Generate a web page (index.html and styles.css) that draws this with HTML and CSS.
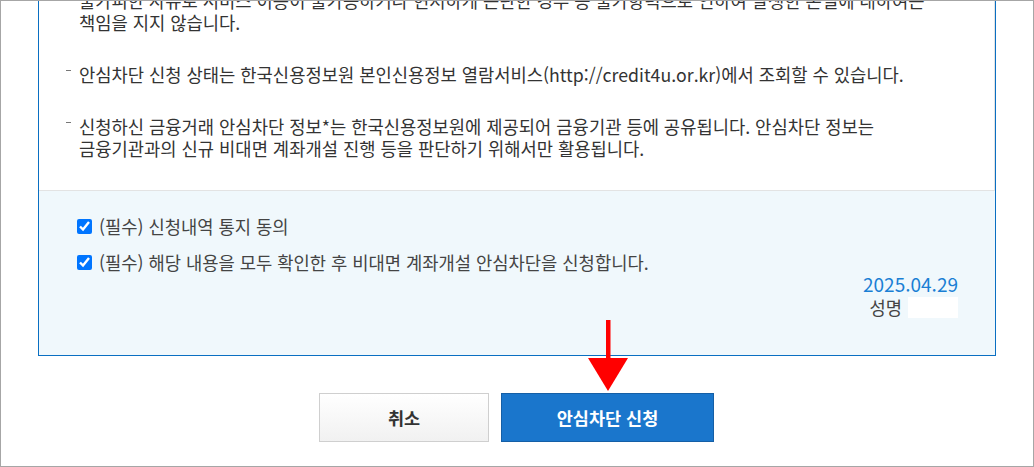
FILE: index.html
```html
<!DOCTYPE html>
<html lang="ko">
<head>
<meta charset="utf-8">
<title>안심차단 신청</title>
<link rel="stylesheet" href="styles.css">
</head>
<body>
<div class="frame">
  <div class="box">
    <ul class="notice">
      <li><span class="txt">불가피한 사유로 서비스 이용이 불가능하거나 현저하게 곤란한 경우 등 불가항력으로 인하여 발생한 손실에 대하여는<br>책임을 지지 않습니다.</span></li>
      <li><span class="txt">안심차단 신청 상태는 한국신용정보원 본인신용정보 열람서비스(http://credit4u.or.kr)에서 조회할 수 있습니다.</span></li>
      <li><span class="txt">신청하신 금융거래 안심차단 정보*는 한국신용정보원에 제공되어 금융기관 등에 공유됩니다. 안심차단 정보는<br>금융기관과의 신규 비대면 계좌개설 진행 등을 판단하기 위해서만 활용됩니다.</span></li>
    </ul>
    <div class="agree">
      <label class="check"><input type="checkbox" checked><span>(필수) 신청내역 통지 동의</span></label>
      <label class="check"><input type="checkbox" checked><span>(필수) 해당 내용을 모두 확인한 후 비대면 계좌개설 안심차단을 신청합니다.</span></label>
      <div class="sign">
        <div class="date">2025.04.29</div>
        <div class="name"><span>성명</span><span class="name-box"></span></div>
      </div>
    </div>
  </div>
  <div class="buttons">
    <button class="btn btn-cancel" type="button">취소</button>
    <button class="btn btn-apply" type="button">안심차단 신청</button>
  </div>
  <svg class="arrow" width="40" height="71" viewBox="0 0 40 71" aria-hidden="true">
    <rect x="18" y="0" width="4.5" height="40" fill="#ff0000"/>
    <polygon points="0,38 40,38 20,71" fill="#ff0000"/>
  </svg>
</div>
</body>
</html>
```
FILE: styles.css
```css
* { box-sizing: border-box; }
html, body { margin: 0; padding: 0; background: #fff; }
body {
  font-family: "Noto Sans CJK KR", "Noto Sans", sans-serif;
  color: #333;
}
.frame {
  position: relative;
  width: 1034px;
  height: 467px;
  border: 1px solid #a6a6a6;
  overflow: hidden;
  background: #fff;
}
.box {
  margin: -50px 0 0 37px;
  width: 958px;
  border: 1px solid #0a6fc2;
  background: #fff;
}
.notice {
  list-style: none;
  margin: 0;
  padding: 37px 30px 31px 27px;
  border-bottom: 1px solid #e3e3e3;
  border-right: 1px solid #e3e3e3;
}
.notice li {
  display: flex;
  font-size: 17.7px;
  line-height: 22px;
  color: #333;
  margin-bottom: 30px;
  white-space: nowrap;
}
.notice li:last-child { margin-bottom: 0; }
.notice li::before {
  content: "";
  flex: 0 0 5px;
  height: 1px;
  background: #777;
  margin: 7px 8px 0 0;
}
.agree {
  background: #f0f8fc;
  padding: 24px 37px 36px 38px;
  display: flex;
  flex-direction: column;
}
.check {
  display: flex;
  align-items: center;
  gap: 7px;
  height: 22px;
  font-size: 17.7px;
  color: #444;
  margin-bottom: 14px;
}
.check:nth-of-type(2) { margin-bottom: 0; }
.check input {
  width: 15px;
  height: 15px;
  margin: 0;
  accent-color: #0075ff;
}
.sign {
  display: flex;
  flex-direction: column;
  align-items: flex-end;
}
.date {
  font-size: 19px;
  line-height: 22px;
  color: #1a7fd4;
}
.name {
  display: flex;
  align-items: center;
  gap: 6px;
  height: 24px;
  font-size: 17.7px;
  color: #444;
}
.name-box {
  display: block;
  width: 50px;
  height: 21px;
  background: #fff;
}
.buttons {
  display: flex;
  justify-content: center;
  gap: 12px;
  margin-top: 37px;
  padding-right: 1px;
}
.btn {
  height: 49px;
  font-family: "Noto Sans CJK KR", "Noto Sans", sans-serif;
  font-size: 17.5px;
  font-weight: 700;
  padding: 0;
  cursor: pointer;
}
.btn-cancel {
  width: 170px;
  border: 1px solid #cfcfcf;
  background: linear-gradient(#ffffff, #f1f1f1);
  color: #333;
}
.btn-apply {
  width: 213px;
  border: 1px solid #155fa6;
  background: #1a76cc;
  color: #fff;
}
.arrow {
  position: absolute;
  left: 587px;
  top: 319px;
}
```
